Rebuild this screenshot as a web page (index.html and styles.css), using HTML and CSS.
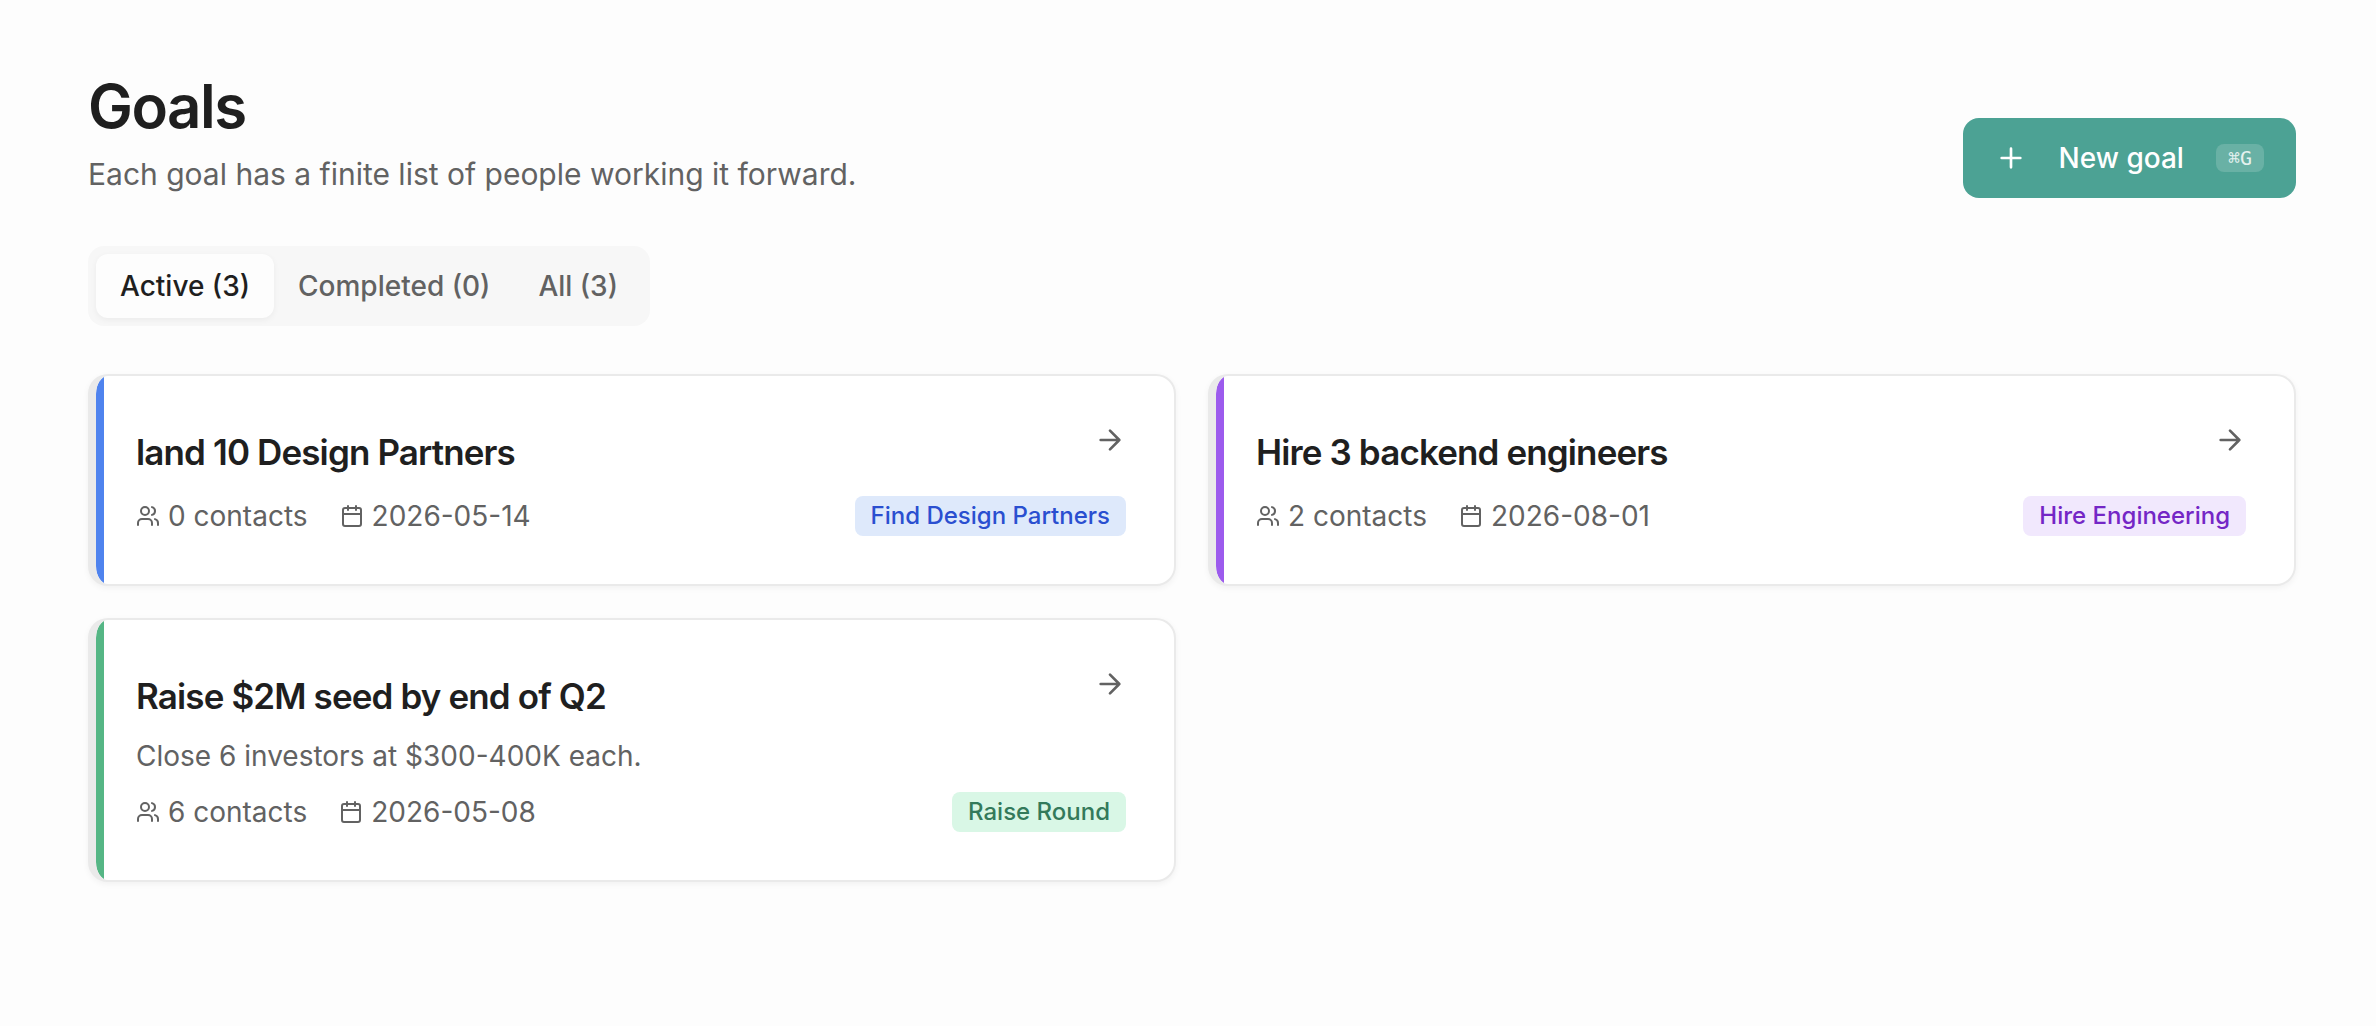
FILE: index.html
```html
<!DOCTYPE html>
<html lang="en">
<head>
<meta charset="utf-8">
<meta name="viewport" content="width=device-width, initial-scale=1">
<title>Goals</title>
<link rel="stylesheet" href="styles.css">
</head>
<body>
<svg class="sprite" aria-hidden="true">
  <symbol id="plus" viewBox="0 0 24 24"><path d="M5 12h14M12 5v14"/></symbol>
  <symbol id="arrow" viewBox="0 0 24 24"><path d="M5 12h14M12 5l7 7-7 7"/></symbol>
  <symbol id="users" viewBox="0 0 24 24"><path d="M16 21v-2a4 4 0 0 0-4-4H6a4 4 0 0 0-4 4v2"/><circle cx="9" cy="7" r="4"/><path d="M22 21v-2a4 4 0 0 0-3-3.87M16 3.13a4 4 0 0 1 0 7.75"/></symbol>
  <symbol id="calendar" viewBox="0 0 24 24"><path d="M8 2v4M16 2v4M3 10h18"/><rect x="3" y="4" width="18" height="18" rx="2"/></symbol>
</svg>
<main class="page">
  <header class="header">
    <div>
      <h1 class="heading">Goals</h1>
      <p class="subtitle">Each goal has a finite list of people working it forward.</p>
    </div>
    <button class="new-goal" type="button">
      <svg class="icon icon-large" aria-hidden="true"><use href="#plus"/></svg>
      <span>New goal</span>
      <kbd class="shortcut">⌘G</kbd>
    </button>
  </header>

  <div class="tabs" role="tablist" aria-label="Filter goals">
    <button class="tab tab-active" type="button" role="tab" aria-selected="true">Active (3)</button>
    <button class="tab" type="button" role="tab" aria-selected="false">Completed (0)</button>
    <button class="tab" type="button" role="tab" aria-selected="false">All (3)</button>
  </div>

  <section class="goals" aria-label="Goals">
    <a class="card card-blue" href="#design-partners">
      <div class="card-top">
        <h2 class="card-title">land 10 Design Partners</h2>
        <svg class="icon icon-large" aria-hidden="true"><use href="#arrow"/></svg>
      </div>
      <div class="card-meta">
        <span class="meta"><svg class="icon" aria-hidden="true"><use href="#users"/></svg>0 contacts</span>
        <span class="meta"><svg class="icon" aria-hidden="true"><use href="#calendar"/></svg>2026-05-14</span>
        <span class="badge">Find Design Partners</span>
      </div>
    </a>
    <a class="card card-purple" href="#backend-engineers">
      <div class="card-top">
        <h2 class="card-title">Hire 3 backend engineers</h2>
        <svg class="icon icon-large" aria-hidden="true"><use href="#arrow"/></svg>
      </div>
      <div class="card-meta">
        <span class="meta"><svg class="icon" aria-hidden="true"><use href="#users"/></svg>2 contacts</span>
        <span class="meta"><svg class="icon" aria-hidden="true"><use href="#calendar"/></svg>2026-08-01</span>
        <span class="badge">Hire Engineering</span>
      </div>
    </a>
    <a class="card card-green" href="#seed-round">
      <div class="card-top">
        <h2 class="card-title">Raise $2M seed by end of Q2</h2>
        <svg class="icon icon-large" aria-hidden="true"><use href="#arrow"/></svg>
      </div>
      <p class="card-text">Close 6 investors at $300-400K each.</p>
      <div class="card-meta">
        <span class="meta"><svg class="icon" aria-hidden="true"><use href="#users"/></svg>6 contacts</span>
        <span class="meta"><svg class="icon" aria-hidden="true"><use href="#calendar"/></svg>2026-05-08</span>
        <span class="badge">Raise Round</span>
      </div>
    </a>
  </section>
</main>
</body>
</html>
```
FILE: styles.css
```css
* { box-sizing: border-box; margin: 0; }

body {
  background: #fdfdfd;
  color: #1f1f1f;
  font: 400 28px/40px Inter, "Liberation Sans", sans-serif;
}

button { border: 0; font: inherit; cursor: pointer; }

.sprite { display: none; }

.icon {
  flex: none;
  width: 24px;
  height: 24px;
  fill: none;
  stroke: currentColor;
  stroke-width: 2;
  stroke-linecap: round;
  stroke-linejoin: round;
}

.icon-large { width: 32px; height: 32px; }

.page {
  display: flex;
  flex-direction: column;
  gap: 48px;
  padding: 70px 80px 88px 88px;
}

.header {
  display: flex;
  align-items: flex-end;
  justify-content: space-between;
  gap: 32px;
}

.heading {
  font-size: 60px;
  font-weight: 600;
  line-height: 72px;
  letter-spacing: -0.025em;
}

.subtitle {
  margin-top: 8px;
  color: #626262;
  font-size: 30px;
  line-height: 48px;
}

.new-goal {
  display: flex;
  align-items: center;
  gap: 32px;
  height: 80px;
  padding: 0 32px;
  border-radius: 16px;
  background: #4ca294;
  color: #fff;
  font-weight: 500;
  white-space: nowrap;
}

.shortcut {
  padding: 0 12px;
  border-radius: 8px;
  background: #69b1a5;
  color: #e4f1ef;
  font: 400 20px/28px "DejaVu Sans Mono", monospace;
}

.tabs {
  display: flex;
  align-self: flex-start;
  padding: 8px;
  border-radius: 16px;
  background: #f7f7f7;
}

.tab {
  padding: 12px 24px;
  border-radius: 12px;
  background: transparent;
  color: #626262;
  font-weight: 500;
}

.tab-active {
  background: #fdfdfd;
  color: #1f1f1f;
  box-shadow: 0 2px 6px rgb(0 0 0 / 5%);
}

.goals {
  display: grid;
  grid-template-columns: repeat(2, minmax(0, 1fr));
  gap: 32px;
}

.card {
  padding: 48px 48px 48px 40px;
  border: 2px solid #eaeaea;
  border-left-width: 8px;
  border-radius: 20px;
  background: linear-gradient(var(--accent), var(--accent)) left / 8px 100% no-repeat padding-box, #fff;
  box-shadow: 0 2px 6px rgb(0 0 0 / 5%);
  color: #626262;
  text-decoration: none;
}

.card-blue { --accent: #4f83ee; --tint: #dee9fb; --ink: #2a4fd0; }
.card-purple { --accent: #9c5bed; --tint: #f1e8fd; --ink: #7426c6; }
.card-green { --accent: #55b685; --tint: #d9f7e6; --ink: #337a5b; }

.card-top {
  display: flex;
  align-items: flex-start;
  justify-content: space-between;
  gap: 16px;
}

.card-title {
  color: #1f1f1f;
  font-size: 35px;
  font-weight: 600;
  line-height: 56px;
  letter-spacing: -0.025em;
}

.card-text { margin-top: 12px; }

.card-meta {
  display: flex;
  align-items: center;
  gap: 32px;
  margin-top: 16px;
}

.meta {
  display: flex;
  align-items: center;
  gap: 8px;
  white-space: nowrap;
}

.badge {
  margin-left: auto;
  padding: 0 16px;
  border-radius: 8px;
  background: var(--tint);
  color: var(--ink);
  font-size: 24px;
  font-weight: 500;
  white-space: nowrap;
}
```
